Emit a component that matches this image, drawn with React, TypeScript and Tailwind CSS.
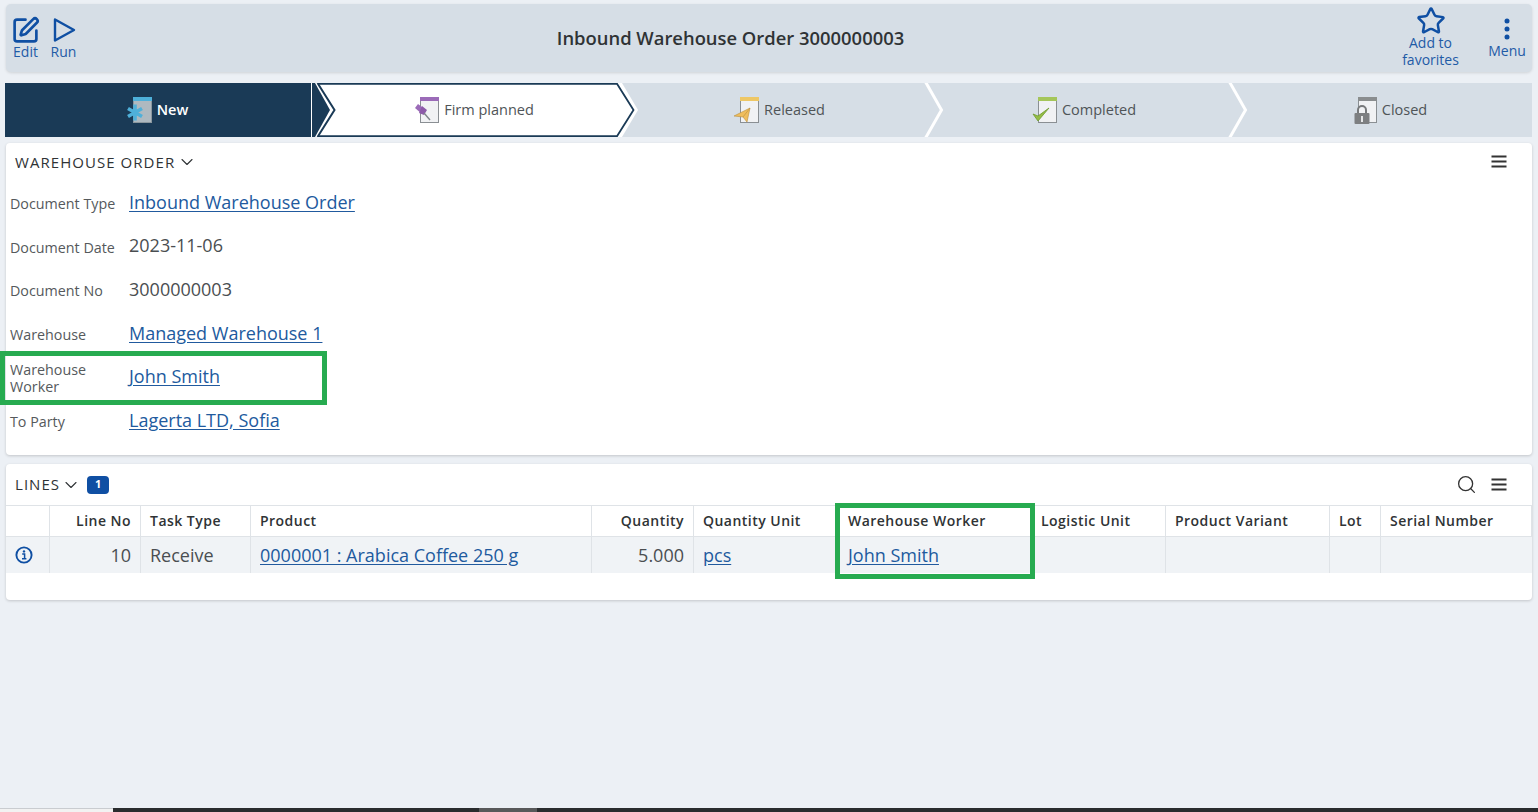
import { ChevronDown, Search, SquarePen, Star } from "lucide-react";

const rows = [
  { label: "Document Type", value: "Inbound Warehouse Order", link: true },
  { label: "Document Date", value: "2023-11-06", link: false },
  { label: "Document No", value: "3000000003", link: false },
  { label: "Warehouse", value: "Managed Warehouse 1", link: true },
  { label: "Warehouse Worker", value: "John Smith", link: true },
  { label: "To Party", value: "Lagerta LTD, Sofia", link: true },
];

const columns = [
  { title: "", value: "" },
  { title: "Line No", value: "10", right: true },
  { title: "Task Type", value: "Receive" },
  { title: "Product", value: "0000001 : Arabica Coffee 250 g", link: true },
  { title: "Quantity", value: "5.000", right: true },
  { title: "Quantity Unit", value: "pcs", link: true },
  { title: "Warehouse Worker", value: "John Smith", link: true },
  { title: "Logistic Unit", value: "" },
  { title: "Product Variant", value: "" },
  { title: "Lot", value: "" },
  { title: "Serial Number", value: "" },
];

function Hamburger() {
  return (
    <svg width="16" height="13" viewBox="0 0 16 13" className="text-[#333]">
      <path d="M0.5 1.5H15.5M0.5 6.5H15.5M0.5 11.5H15.5" stroke="currentColor" strokeWidth="1.8" />
    </svg>
  );
}

function DocIcon({ bar, body = "#f1f2f4", edge = "#8a8f93", children }: { bar: string; body?: string; edge?: string; children: React.ReactNode }) {
  return (
    <svg width="28" height="28" viewBox="0 0 28 28" className="shrink-0">
      <rect x="7.5" y="1.5" width="18" height="25" fill={body} stroke={edge} />
      <rect x="7" y="1" width="19" height="4" fill={bar} />
      {children}
    </svg>
  );
}

function Step({ icon, label, active, className, children }: { icon: React.ReactNode; label: string; active?: boolean; className: string; children?: React.ReactNode }) {
  return (
    <div className={`relative flex items-center justify-center gap-[3px] pr-[2px] ${className}`}>
      {icon}
      <span className={active ? "pb-[1px] text-[14.5px] font-semibold text-white" : "pb-[1px] text-[14.5px] text-[#4f5457]"}>{label}</span>
      {children}
    </div>
  );
}

function Divider({ className }: { className: string }) {
  return (
    <svg width="22" height="54" viewBox="0 0 22 54" className={`absolute top-0 ${className}`}>
      <path d="M2 -2L18.5 27L2 56" fill="none" stroke="#fff" strokeWidth="3" />
    </svg>
  );
}

export default function App() {
  return (
    <div className="flex h-[812px] flex-col overflow-hidden bg-[#ecf0f5] font-['Open_Sans',sans-serif]">
      <div className="flex-1 pl-[5px] pr-[6px] pt-[4px]">
        <header className="ml-px flex h-[68px] items-start rounded-[5px] bg-[#d6dee6] shadow-[0_1px_3px_rgba(0,0,0,0.12)]">
          <div className="flex w-[78px] shrink-0 gap-[11px] pl-[6px] pt-[12px] text-[14px] text-[#1f5ba6]">
            <button className="flex w-[27px] flex-col items-center leading-[16px]">
              <SquarePen size={29} strokeWidth={2.2} className="text-[#0f4fa3]" />
              <span className="-mt-[1px]">Edit</span>
            </button>
            <button className="flex w-[27px] flex-col items-center leading-[16px]">
              <svg width="26" height="28" viewBox="0 0 26 28" className="text-[#0f4fa3]">
                <path d="M4 3.5L23 14L4 24.5Z" fill="none" stroke="currentColor" strokeWidth="2.4" strokeLinejoin="round" />
              </svg>
              <span>Run</span>
            </button>
          </div>
          <h1 className="flex h-[68px] flex-1 items-center justify-center pr-[18px] text-[18.4px] font-semibold text-[#2f3335]">
            Inbound Warehouse Order 3000000003
          </h1>
          <div className="flex w-[137px] shrink-0 gap-[16px] pt-[2px] text-[14px] leading-[17px] text-[#1f5ba6]">
            <button className="flex w-[71px] flex-col items-center">
              <Star size={30} strokeWidth={2} className="text-[#0f4fa3]" />
              <span className="-mt-[2px] w-[70px] text-center">Add to favorites</span>
            </button>
            <button className="flex w-[50px] flex-col items-center">
              <svg width="6" height="24" viewBox="0 0 6 24" className="mt-[11px] text-[#0f4fa3]">
                <circle cx="3" cy="4" r="2.5" fill="currentColor" />
                <circle cx="3" cy="12" r="2.5" fill="currentColor" />
                <circle cx="3" cy="20" r="2.5" fill="currentColor" />
              </svg>
              <span className="mt-[1px]">Menu</span>
            </button>
          </div>
        </header>

        <nav className="mt-[11px] flex h-[54px] bg-[#d6dee6]">
          <Step
            className="w-[306px] bg-[#1a3a56]"
            active
            label="New"
            icon={
              <svg width="28" height="28" viewBox="0 0 28 28" className="shrink-0">
                <rect x="7.5" y="1.5" width="18" height="25" fill="#aeb9c0" stroke="#8b979e" />
                <rect x="7" y="1" width="19" height="4" fill="#4eb0da" />
                <path d="M9 8.5V24.5M2 12.5L16 20.5M16 12.5L2 20.5" stroke="#4eb0da" strokeWidth="3.6" />
              </svg>
            }
          />
          <div className="relative flex w-[328px] items-center justify-center pr-[3px]">
            <svg width="328" height="54" viewBox="0 0 328 54" className="absolute inset-0">
              <polygon points="0,0 311,0 327,27 311,54 0,54" fill="#fff" />
              <polygon points="1,0 4,0 19,27 4,54 1,54" fill="#1a3a56" />
              <path d="M7 0.75H306L322.5 27L306 53.25H7" fill="none" stroke="#1a3a56" strokeWidth="1.8" />
              <path d="M6.5 0L23.5 27L6.5 54" fill="none" stroke="#1a3a56" strokeWidth="2" />
            </svg>
            <div className="relative flex items-center gap-[3px]">
              <DocIcon bar="#9b6bb8">
                <path d="M5 8L13 14L9 18L2 12Z" fill="#9b6bb8" />
                <path d="M9 10L6 17L11 19L14 14Z" fill="#8d5aa9" />
                <path d="M11 17L17 24" stroke="#7f8589" strokeWidth="1.4" />
              </DocIcon>
              <span className="pb-[1px] text-[14.5px] text-[#4f5457]">Firm planned</span>
            </div>
          </div>
          <Step
            className="w-[282px]"
            label="Released"
            icon={
              <DocIcon bar="#eec765">
                <path d="M1 20L17 12L14 26L10 21Z" fill="#efbd5c" stroke="#b98f3c" strokeWidth="0.6" />
                <path d="M10 21L17 12" stroke="#b98f3c" strokeWidth="0.6" />
              </DocIcon>
            }
          />
          <Step
            className="w-[327px]"
            label="Completed"
            icon={
              <DocIcon bar="#a5c65a">
                <path d="M2 18L7 25L18 12L7 20Z" fill="#95bd45" stroke="#6f9a2e" strokeWidth="0.8" strokeLinejoin="round" />
              </DocIcon>
            }
          >
            <Divider className="left-[2px]" />
            <Divider className="left-[306px]" />
          </Step>
          <Step
            className="flex-1"
            label="Closed"
            icon={
              <DocIcon bar="#8a8d8f">
                <path d="M7 18V14a4 4 0 0 1 8 0V18" fill="none" stroke="#77797b" strokeWidth="2" />
                <rect x="3.5" y="17" width="15" height="11" rx="1" fill="#7d7f81" />
                <rect x="10" y="20" width="2" height="6" fill="#e6e7e8" />
              </DocIcon>
            }
          />
        </nav>

        <section className="relative ml-px mt-[6px] h-[312px] rounded-[4px] bg-white shadow-[0_1px_3px_rgba(0,0,0,0.18)]">
          <div className="flex h-[37.5px] items-center justify-between pl-[9px] pr-[25px]">
            <div className="flex items-center gap-[2px] text-[15px] tracking-[1.05px] text-[#2f3335]">
              WAREHOUSE ORDER
              <ChevronDown size={20} strokeWidth={1.3} />
            </div>
            <Hamburger />
          </div>
          <div>
            {rows.map((row) => (
              <div key={row.label} className="flex h-[43.6px] items-center pl-[4px]">
                <div className="w-[119px] pr-[8px] pt-[3px] text-[14.3px] leading-[17px] text-[#55595c]">{row.label}</div>
                <div className={row.link ? "text-[18px] text-[#215a9e] underline underline-offset-2" : "text-[18px] text-[#4a4e51]"}>
                  {row.value}
                </div>
              </div>
            ))}
          </div>
          <div className="absolute left-[-6px] top-[208px] h-[54px] w-[327px] border-[5px] border-[#27ab50]"></div>
        </section>

        <section className="relative ml-px mt-[9px] h-[136px] rounded-[4px] bg-white shadow-[0_1px_3px_rgba(0,0,0,0.18)]">
          <div className="flex h-[41px] items-center justify-between pl-[9px] pr-[25px]">
            <div className="flex items-center gap-[1px] text-[15px] tracking-[1.05px] text-[#2f3335]">
              LINES
              <ChevronDown size={20} strokeWidth={1.3} />
              <span className="ml-[5px] flex h-[18px] w-[22px] items-center justify-center rounded-[4px] bg-[#0f4fa3] text-[11px] font-bold tracking-normal text-white">1</span>
            </div>
            <div className="flex items-center gap-[14px] text-[#333]">
              <Search size={21} strokeWidth={1.5} />
              <Hamburger />
            </div>
          </div>
          <div className="grid grid-cols-[44px_91px_110px_341px_102px_145px_193px_134px_164px_51px_151px] border-t border-[#dfe3e7]">
            {columns.map((col) => (
              <div
                key={col.title || "status"}
                className={`flex h-[31px] items-center border-b border-r border-[#dfe3e7] px-[9px] pb-[2px] text-[14px] font-semibold tracking-[0.47px] text-[#2f3335] last:border-r-0 ${col.right ? "justify-end" : ""}`}
              >
                {col.title}
              </div>
            ))}
            {columns.map((col, i) => (
              <div
                key={`${col.title}-cell`}
                className={`flex h-[36px] items-center border-r border-[#dfe3e7] bg-[#f0f3f6] px-[9px] text-[18px] last:border-r-0 ${col.right ? "justify-end" : ""} ${col.link ? "text-[#215a9e] underline underline-offset-2" : "text-[#4a4e51]"}`}
              >
                {i === 0 ? (
                  <svg width="18" height="18" viewBox="0 0 18 18" className="shrink-0">
                    <circle cx="9" cy="9" r="7.6" fill="none" stroke="#0f4fa3" strokeWidth="1.9" />
                    <circle cx="9" cy="5.4" r="1.2" fill="#0f4fa3" />
                    <path d="M7.2 8H9.6V12.6M7 12.8H11.4" fill="none" stroke="#0f4fa3" strokeWidth="1.5" />
                  </svg>
                ) : (
                  col.value
                )}
              </div>
            ))}
          </div>
          <div className="absolute left-[829px] top-[39px] h-[76px] w-[200px] border-[5px] border-[#27ab50]"></div>
        </section>
      </div>
      <div className="flex h-[4px] shrink-0">
        <div className="w-[113px] border-t border-[#c9ccd0] bg-[#f2f2f2]"></div>
        <div className="w-[366px] bg-[#2a2c2e]"></div>
        <div className="w-[58px] bg-[#58595a]"></div>
        <div className="flex-1 bg-[#2a2c2e]"></div>
      </div>
    </div>
  );
}
